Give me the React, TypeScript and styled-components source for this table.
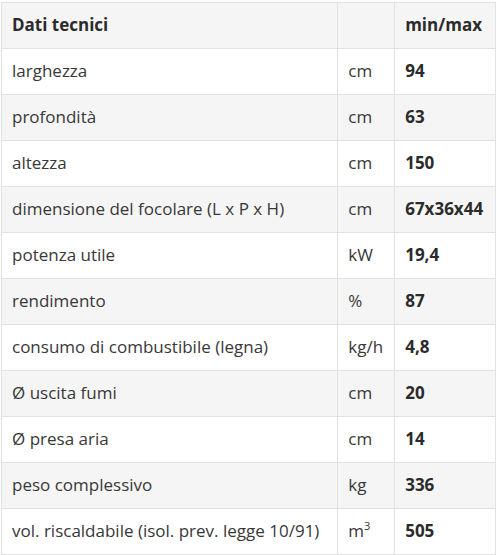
import React from 'react';
import styled, { createGlobalStyle } from 'styled-components';

const GlobalStyle = createGlobalStyle`
  body {
    margin: 0;
    padding: 2px 1px 0 1px;
    background: #fff;
    font-family: "Open Sans", "Liberation Sans", sans-serif;
  }
`;

const Table = styled.table`
  width: 495px;
  border-collapse: collapse;
  font-size: 17px;
  color: #383838;
`;

const Row = styled.tr<{ $striped: boolean }>`
  background-color: ${(p) => (p.$striped ? '#f5f5f5' : '#fff')};
`;

const Cell = styled.td<{ $bold?: boolean; $width?: number }>`
  height: 46px;
  padding: 0 10px;
  border: 1px solid #e2e2e2;
  font-weight: ${(p) => (p.$bold ? 700 : 400)};
  color: ${(p) => (p.$bold ? '#2b2b2b' : '#383838')};
  width: ${(p) => (p.$width ? `${p.$width}px` : 'auto')};
  box-sizing: border-box;
  white-space: nowrap;
  line-height: 1.2;
`;

const Sup = styled.sup`
  font-size: 0.65em;
  line-height: 0;
  vertical-align: 0.6em;
`;

const rows: [string, React.ReactNode, string][] = [
  ['larghezza', 'cm', '94'],
  ['profondità', 'cm', '63'],
  ['altezza', 'cm', '150'],
  ['dimensione del focolare (L x P x H)', 'cm', '67x36x44'],
  ['potenza utile', 'kW', '19,4'],
  ['rendimento', '%', '87'],
  ['consumo di combustibile (legna)', 'kg/h', '4,8'],
  ['Ø uscita fumi', 'cm', '20'],
  ['Ø presa aria', 'cm', '14'],
  ['peso complessivo', 'kg', '336'],
  ['vol. riscaldabile (isol. prev. legge 10/91)', <>m<Sup>3</Sup></>, '505'],
];

const App = () => {
  return (
    <>
      <GlobalStyle />
      <Table>
        <tbody>
          <Row $striped>
            <Cell $bold $width={337}>Dati tecnici</Cell>
            <Cell $width={57}></Cell>
            <Cell $bold $width={101}>min/max</Cell>
          </Row>
          {rows.map(([label, unit, value], i) => (
            <Row key={label} $striped={i % 2 === 1}>
              <Cell>{label}</Cell>
              <Cell>{unit}</Cell>
              <Cell $bold>{value}</Cell>
            </Row>
          ))}
        </tbody>
      </Table>
    </>
  );
};

export default App;
